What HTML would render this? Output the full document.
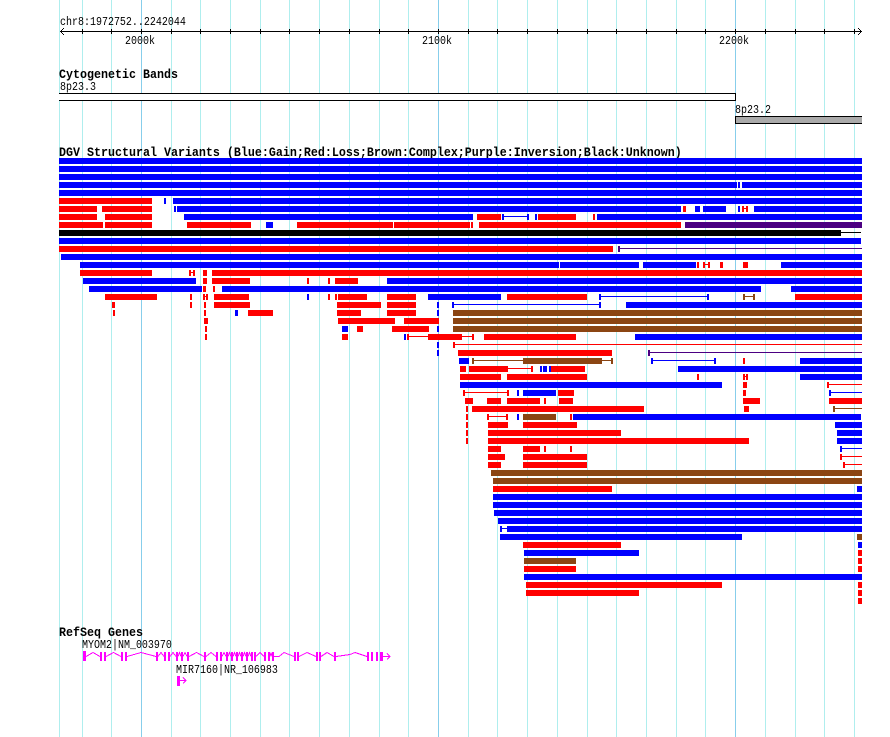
<!DOCTYPE html>
<html lang="en">
<head>
<meta charset="utf-8">
<title>chr8:1972752..2242044</title>
<style>
html,body{margin:0;padding:0;background:#fff}
svg{display:block}
text{font-family:"Liberation Mono",monospace;font-size:12px;fill:#000}
text.b{font-size:13px;font-weight:bold}
</style>
</head>
<body>
<svg xmlns="http://www.w3.org/2000/svg" width="890" height="737" viewBox="0 0 890 737" shape-rendering="crispEdges">
<rect width="890" height="737" fill="#fff"/>
<!-- grid -->
<g fill="#afeeee">
<rect x="59" width="1" height="737"/><rect x="82" width="1" height="737"/><rect x="111" width="1" height="737"/>
<rect x="171" width="1" height="737"/><rect x="200" width="1" height="737"/><rect x="230" width="1" height="737"/>
<rect x="260" width="1" height="737"/><rect x="289" width="1" height="737"/><rect x="319" width="1" height="737"/>
<rect x="349" width="1" height="737"/><rect x="379" width="1" height="737"/><rect x="408" width="1" height="737"/>
<rect x="468" width="1" height="737"/><rect x="497" width="1" height="737"/><rect x="527" width="1" height="737"/>
<rect x="557" width="1" height="737"/><rect x="587" width="1" height="737"/><rect x="616" width="1" height="737"/>
<rect x="646" width="1" height="737"/><rect x="676" width="1" height="737"/><rect x="705" width="1" height="737"/>
<rect x="765" width="1" height="737"/><rect x="795" width="1" height="737"/><rect x="824" width="1" height="737"/>
<rect x="854" width="1" height="737"/>
</g>
<g fill="#87ceeb">
<rect x="141" width="1" height="737"/><rect x="438" width="1" height="737"/><rect x="735" width="1" height="737"/>
</g>
<!-- ruler -->
<g fill="#000">
<rect x="60" y="31" width="802" height="1"/>
<path d="M82 29h1v5h-1zM111 29h1v5h-1zM141 29h1v5h-1zM171 29h1v5h-1zM200 29h1v5h-1zM230 29h1v5h-1zM260 29h1v5h-1zM289 29h1v5h-1zM319 29h1v5h-1zM349 29h1v5h-1zM379 29h1v5h-1zM408 29h1v5h-1zM438 29h1v5h-1zM468 29h1v5h-1zM497 29h1v5h-1zM527 29h1v5h-1zM557 29h1v5h-1zM587 29h1v5h-1zM616 29h1v5h-1zM646 29h1v5h-1zM676 29h1v5h-1zM705 29h1v5h-1zM735 29h1v5h-1zM765 29h1v5h-1zM795 29h1v5h-1zM824 29h1v5h-1zM854 29h1v5h-1z"/>
<path d="M61 30h1v1h-1zM61 32h1v1h-1zM62 29h1v1h-1zM62 33h1v1h-1zM63 28h1v1h-1zM63 34h1v1h-1zM860 30h1v1h-1zM860 32h1v1h-1zM859 29h1v1h-1zM859 33h1v1h-1zM858 28h1v1h-1zM858 34h1v1h-1z"/>
</g>
<text transform="translate(60 25) scale(.8333 1)">chr8:1972752..2242044</text>
<text transform="translate(125 44) scale(.8333 1)">2000k</text>
<text transform="translate(422 44) scale(.8333 1)">2100k</text>
<text transform="translate(719 44) scale(.8333 1)">2200k</text>
<!-- cytobands -->
<text class="b" transform="translate(59 78) scale(.8974 1)">Cytogenetic Bands</text>
<text transform="translate(60 90) scale(.8333 1)">8p23.3</text>
<path d="M59 93H736V101H59z" fill="#000"/><path d="M59 94H735V100H59z" fill="#fff"/>
<text transform="translate(735 113) scale(.8333 1)">8p23.2</text>
<path d="M735 116H862V124H735z" fill="#000"/><path d="M736 117H862V123H736z" fill="#aaaaaa"/>
<!-- DGV -->
<text class="b" transform="translate(59 156) scale(.8974 1)">DGV Structural Variants (Blue:Gain;Red:Loss;Brown:Complex;Purple:Inversion;Black:Unknown)</text>
<g fill="#0000ff">
<rect x="59" y="158" width="803" height="6"/><rect x="59" y="166" width="803" height="6"/><rect x="59" y="174" width="803" height="6"/>
<rect x="59" y="182" width="678" height="6"/><rect x="738" y="182" width="2" height="6"/><rect x="742" y="182" width="120" height="6"/>
<rect x="59" y="190" width="803" height="6"/>
<rect x="164" y="198" width="2" height="6"/><rect x="173" y="198" width="689" height="6"/>
<rect x="174" y="206" width="2" height="6"/><rect x="177" y="206" width="504" height="6"/><rect x="695" y="206" width="5" height="6"/><rect x="703" y="206" width="23" height="6"/><rect x="738" y="206" width="2" height="6"/><rect x="754" y="206" width="108" height="6"/>
<rect x="184" y="214" width="289" height="6"/><rect x="502" y="214" width="2" height="6"/><rect x="504" y="216" width="23" height="1"/><rect x="527" y="214" width="2" height="6"/><rect x="535" y="214" width="2" height="6"/><rect x="597" y="214" width="265" height="6"/>
<rect x="266" y="222" width="7" height="6"/>
<rect x="59" y="238" width="802" height="6"/>
<rect x="61" y="254" width="801" height="6"/>
<rect x="80" y="262" width="479" height="6"/><rect x="560" y="262" width="79" height="6"/><rect x="643" y="262" width="53" height="6"/><rect x="781" y="262" width="81" height="6"/>
<rect x="83" y="278" width="113" height="6"/><rect x="387" y="278" width="475" height="6"/>
<rect x="89" y="286" width="113" height="6"/><rect x="222" y="286" width="539" height="6"/><rect x="791" y="286" width="71" height="6"/>
<rect x="307" y="294" width="2" height="6"/><rect x="428" y="294" width="73" height="6"/><rect x="599" y="294" width="2" height="6"/><rect x="601" y="296" width="106" height="1"/><rect x="707" y="294" width="2" height="6"/>
<rect x="437" y="302" width="2" height="6"/><rect x="452" y="302" width="2" height="6"/><rect x="454" y="304" width="145" height="1"/><rect x="599" y="302" width="2" height="6"/><rect x="626" y="302" width="236" height="6"/>
<rect x="235" y="310" width="3" height="6"/><rect x="437" y="310" width="2" height="6"/>
<rect x="342" y="326" width="6" height="6"/><rect x="437" y="326" width="2" height="6"/>
<rect x="404" y="334" width="2" height="6"/><rect x="635" y="334" width="227" height="6"/>
<rect x="437" y="342" width="2" height="6"/>
<rect x="437" y="350" width="2" height="6"/>
<rect x="459" y="358" width="10" height="6"/><rect x="651" y="358" width="2" height="6"/><rect x="653" y="360" width="61" height="1"/><rect x="714" y="358" width="2" height="6"/><rect x="800" y="358" width="62" height="6"/>
<rect x="540" y="366" width="2" height="6"/><rect x="543" y="366" width="4" height="6"/><rect x="549" y="366" width="2" height="6"/><rect x="678" y="366" width="184" height="6"/>
<rect x="800" y="374" width="62" height="6"/>
<rect x="460" y="382" width="262" height="6"/>
<rect x="517" y="390" width="2" height="6"/><rect x="523" y="390" width="33" height="6"/><rect x="829" y="390" width="2" height="6"/><rect x="831" y="392" width="31" height="1"/>
<rect x="517" y="414" width="2" height="6"/><rect x="573" y="414" width="288" height="6"/>
<rect x="835" y="422" width="27" height="6"/>
<rect x="837" y="430" width="25" height="6"/>
<rect x="837" y="438" width="25" height="6"/>
<rect x="840" y="446" width="2" height="6"/><rect x="842" y="448" width="20" height="1"/>
<rect x="857" y="486" width="5" height="6"/>
<rect x="493" y="494" width="369" height="6"/><rect x="493" y="502" width="369" height="6"/><rect x="494" y="510" width="368" height="6"/><rect x="498" y="518" width="364" height="6"/>
<rect x="500" y="526" width="2" height="6"/><rect x="502" y="528" width="5" height="1"/><rect x="507" y="526" width="355" height="6"/>
<rect x="500" y="534" width="242" height="6"/>
<rect x="858" y="542" width="4" height="6"/>
<rect x="524" y="550" width="115" height="6"/>
<rect x="524" y="574" width="338" height="6"/>
</g>
<g fill="#ff0000">
<rect x="59" y="198" width="93" height="6"/>
<rect x="59" y="206" width="38" height="6"/><rect x="102" y="206" width="50" height="6"/><rect x="683" y="206" width="3" height="6"/><rect x="742" y="206" width="2" height="6"/><rect x="744" y="208" width="2" height="1"/><rect x="746" y="206" width="2" height="6"/>
<rect x="59" y="214" width="38" height="6"/><rect x="105" y="214" width="47" height="6"/><rect x="477" y="214" width="24" height="6"/><rect x="538" y="214" width="38" height="6"/><rect x="593" y="214" width="2" height="6"/>
<rect x="59" y="222" width="44" height="6"/><rect x="105" y="222" width="47" height="6"/><rect x="187" y="222" width="64" height="6"/><rect x="297" y="222" width="96" height="6"/><rect x="394" y="222" width="76" height="6"/><rect x="471" y="222" width="2" height="6"/><rect x="479" y="222" width="202" height="6"/>
<rect x="59" y="246" width="554" height="6"/>
<rect x="697" y="262" width="2" height="6"/><rect x="703" y="262" width="2" height="6"/><rect x="705" y="264" width="3" height="1"/><rect x="708" y="262" width="2" height="6"/><rect x="720" y="262" width="3" height="6"/><rect x="743" y="262" width="5" height="6"/>
<rect x="80" y="270" width="72" height="6"/><rect x="189" y="270" width="2" height="6"/><rect x="191" y="272" width="2" height="1"/><rect x="193" y="270" width="2" height="6"/><rect x="203" y="270" width="4" height="6"/><rect x="212" y="270" width="650" height="6"/>
<rect x="203" y="278" width="4" height="6"/><rect x="212" y="278" width="38" height="6"/><rect x="307" y="278" width="2" height="6"/><rect x="328" y="278" width="2" height="6"/><rect x="335" y="278" width="23" height="6"/>
<rect x="203" y="286" width="3" height="6"/><rect x="213" y="286" width="2" height="6"/>
<rect x="105" y="294" width="52" height="6"/><rect x="190" y="294" width="2" height="6"/><rect x="203" y="294" width="2" height="6"/><rect x="205" y="296" width="1" height="1"/><rect x="206" y="294" width="2" height="6"/><rect x="214" y="294" width="35" height="6"/><rect x="328" y="294" width="2" height="6"/><rect x="335" y="294" width="2" height="6"/><rect x="338" y="294" width="29" height="6"/><rect x="387" y="294" width="29" height="6"/><rect x="507" y="294" width="80" height="6"/><rect x="795" y="294" width="67" height="6"/>
<rect x="112" y="302" width="3" height="6"/><rect x="190" y="302" width="2" height="6"/><rect x="204" y="302" width="2" height="6"/><rect x="214" y="302" width="36" height="6"/><rect x="337" y="302" width="44" height="6"/><rect x="387" y="302" width="29" height="6"/>
<rect x="113" y="310" width="2" height="6"/><rect x="204" y="310" width="2" height="6"/><rect x="248" y="310" width="25" height="6"/><rect x="337" y="310" width="24" height="6"/><rect x="387" y="310" width="29" height="6"/>
<rect x="204" y="318" width="4" height="6"/><rect x="338" y="318" width="57" height="6"/><rect x="404" y="318" width="35" height="6"/>
<rect x="205" y="326" width="2" height="6"/><rect x="357" y="326" width="6" height="6"/><rect x="392" y="326" width="37" height="6"/>
<rect x="205" y="334" width="2" height="6"/><rect x="342" y="334" width="6" height="6"/><rect x="407" y="334" width="2" height="6"/><rect x="409" y="336" width="19" height="1"/><rect x="428" y="334" width="34" height="6"/><rect x="462" y="336" width="10" height="1"/><rect x="472" y="334" width="2" height="6"/><rect x="484" y="334" width="92" height="6"/>
<rect x="453" y="342" width="2" height="6"/><rect x="455" y="344" width="407" height="1"/>
<rect x="458" y="350" width="154" height="6"/>
<rect x="743" y="358" width="2" height="6"/>
<rect x="460" y="366" width="6" height="6"/><rect x="469" y="366" width="39" height="6"/><rect x="508" y="368" width="23" height="1"/><rect x="531" y="366" width="2" height="6"/><rect x="551" y="366" width="34" height="6"/>
<rect x="460" y="374" width="41" height="6"/><rect x="507" y="374" width="80" height="6"/><rect x="697" y="374" width="2" height="6"/><rect x="743" y="374" width="2" height="6"/><rect x="745" y="376" width="1" height="1"/><rect x="746" y="374" width="2" height="6"/>
<rect x="743" y="382" width="4" height="6"/><rect x="827" y="382" width="2" height="6"/><rect x="829" y="384" width="33" height="1"/>
<rect x="463" y="390" width="2" height="6"/><rect x="465" y="392" width="42" height="1"/><rect x="507" y="390" width="2" height="6"/><rect x="558" y="390" width="16" height="6"/><rect x="743" y="390" width="3" height="6"/>
<rect x="465" y="398" width="8" height="6"/><rect x="487" y="398" width="14" height="6"/><rect x="507" y="398" width="33" height="6"/><rect x="544" y="398" width="2" height="6"/><rect x="559" y="398" width="14" height="6"/><rect x="743" y="398" width="17" height="6"/><rect x="829" y="398" width="33" height="6"/>
<rect x="466" y="406" width="2" height="6"/><rect x="472" y="406" width="172" height="6"/><rect x="744" y="406" width="5" height="6"/>
<rect x="466" y="414" width="2" height="6"/><rect x="487" y="414" width="2" height="6"/><rect x="489" y="416" width="17" height="1"/><rect x="506" y="414" width="2" height="6"/><rect x="570" y="414" width="2" height="6"/>
<rect x="466" y="422" width="2" height="6"/><rect x="488" y="422" width="20" height="6"/><rect x="523" y="422" width="54" height="6"/>
<rect x="466" y="430" width="2" height="6"/><rect x="488" y="430" width="133" height="6"/>
<rect x="466" y="438" width="2" height="6"/><rect x="488" y="438" width="261" height="6"/>
<rect x="488" y="446" width="13" height="6"/><rect x="523" y="446" width="17" height="6"/><rect x="544" y="446" width="2" height="6"/><rect x="570" y="446" width="2" height="6"/>
<rect x="488" y="454" width="17" height="6"/><rect x="523" y="454" width="64" height="6"/><rect x="840" y="454" width="2" height="6"/><rect x="842" y="456" width="20" height="1"/>
<rect x="488" y="462" width="13" height="6"/><rect x="523" y="462" width="64" height="6"/><rect x="843" y="462" width="2" height="6"/><rect x="845" y="464" width="17" height="1"/>
<rect x="493" y="486" width="119" height="6"/>
<rect x="523" y="542" width="98" height="6"/>
<rect x="858" y="550" width="4" height="6"/><rect x="858" y="558" width="4" height="6"/>
<rect x="524" y="566" width="52" height="6"/><rect x="858" y="566" width="4" height="6"/>
<rect x="526" y="582" width="196" height="6"/><rect x="858" y="582" width="4" height="6"/>
<rect x="526" y="590" width="113" height="6"/><rect x="858" y="590" width="4" height="6"/>
<rect x="858" y="598" width="4" height="6"/>
</g>
<g fill="#8b4513">
<rect x="743" y="294" width="2" height="6"/><rect x="745" y="296" width="8" height="1"/><rect x="753" y="294" width="2" height="6"/>
<rect x="453" y="310" width="409" height="6"/><rect x="453" y="318" width="409" height="6"/><rect x="453" y="326" width="409" height="6"/>
<rect x="472" y="358" width="2" height="6"/><rect x="474" y="360" width="49" height="1"/><rect x="523" y="358" width="79" height="6"/><rect x="602" y="360" width="9" height="1"/><rect x="611" y="358" width="2" height="6"/>
<rect x="833" y="406" width="2" height="6"/><rect x="835" y="408" width="27" height="1"/>
<rect x="523" y="414" width="33" height="6"/>
<rect x="491" y="470" width="371" height="6"/><rect x="493" y="478" width="369" height="6"/>
<rect x="857" y="534" width="5" height="6"/>
<rect x="524" y="558" width="52" height="6"/>
</g>
<g fill="#4b0082">
<rect x="685" y="222" width="177" height="6"/>
<rect x="618" y="246" width="2" height="6"/><rect x="620" y="248" width="242" height="1"/>
<rect x="648" y="350" width="2" height="6"/><rect x="650" y="352" width="212" height="1"/>
</g>
<g fill="#000">
<rect x="59" y="230" width="782" height="6"/><rect x="841" y="232" width="20" height="1"/>
</g>
<!-- RefSeq -->
<text class="b" transform="translate(59 636) scale(.8974 1)">RefSeq Genes</text>
<text transform="translate(82 648) scale(.8333 1)">MYOM2|NM_003970</text>
<g fill="#ff00ff">
<rect x="83" y="651" width="3" height="10"/><rect x="100" y="652" width="2" height="9"/><rect x="104" y="652" width="2" height="9"/><rect x="121" y="652" width="2" height="9"/><rect x="125" y="652" width="2" height="9"/>
<rect x="156" y="652" width="2" height="9"/><rect x="164" y="652" width="2" height="9"/><rect x="168" y="652" width="2" height="9"/><rect x="176" y="652" width="2" height="9"/><rect x="181" y="652" width="2" height="9"/><rect x="187" y="652" width="2" height="9"/>
<rect x="204" y="652" width="2" height="9"/><rect x="216" y="652" width="2" height="9"/><rect x="220" y="652" width="2" height="9"/><rect x="226" y="652" width="2" height="9"/><rect x="231" y="652" width="2" height="9"/><rect x="236" y="652" width="2" height="9"/>
<rect x="241" y="652" width="2" height="9"/><rect x="246" y="652" width="2" height="9"/><rect x="251" y="652" width="2" height="9"/><rect x="254" y="652" width="2" height="9"/><rect x="264" y="652" width="2" height="9"/><rect x="268" y="652" width="2" height="9"/><rect x="272" y="652" width="2" height="9"/>
<rect x="294" y="652" width="2" height="9"/><rect x="297" y="652" width="2" height="9"/><rect x="316" y="652" width="2" height="9"/><rect x="319" y="652" width="2" height="9"/><rect x="334" y="652" width="2" height="9"/>
<rect x="367" y="652" width="2" height="9"/><rect x="371" y="652" width="2" height="9"/><rect x="376" y="652" width="2" height="9"/><rect x="380" y="652" width="3" height="9"/>
<rect x="177" y="676" width="3" height="10"/><rect x="180" y="680" width="6" height="1"/>
</g>
<g fill="none" stroke="#ff00ff" stroke-width="1">
<path d="M86 656.5L93 652.5L100 656.5M106 656.5L113.5 652.5L121 656.5M127 656.5L134 654.5L141 652.5L156 656.5M158 656.5L161 652.5L164 656.5M170 656.5L173 652.5L176 656.5M178 656.5L179.5 652.5L181 656.5M183 656.5L185 652.5L187 656.5M189 656.5L196.5 652.5L204 656.5M206 656.5L211 652.5L216 656.5M222 656.5L224 652.5L226 656.5M228 656.5L229.5 652.5L231 656.5M233 656.5L234.5 652.5L236 656.5M238 656.5L239.5 652.5L241 656.5M243 656.5L244.5 652.5L246 656.5M248 656.5L249.5 652.5L251 656.5M256 656.5L260 652.5L264 656.5M270 656.5L271 652.5L272 656.5M274 656.5L279 656.5L284 652.5L294 656.5M299 656.5L307 652.5L316 656.5M321 656.5L327 652.5L334 656.5M336 656.5L350 654.5L355 652.5L367 656.5M383 656.5L390 656.5M387 653.5L390 656.5L387 659.5M180 680.5L186 680.5M183 677.5L186 680.5L183 683.5"/>
</g>
<text transform="translate(176 673) scale(.8333 1)">MIR7160|NR_106983</text>
</svg>
</body>
</html>
